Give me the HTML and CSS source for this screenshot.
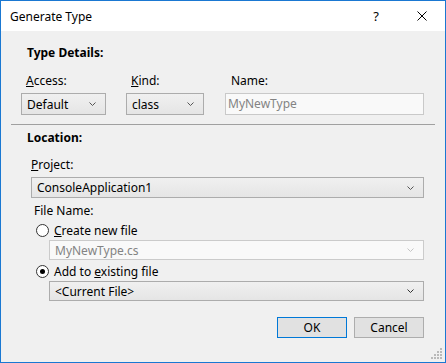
FILE: index.html
```html
<!DOCTYPE html>
<html>
  <head>
    <meta charset="utf-8">
    <title>Generate Type</title>
    <link rel="stylesheet" href="styles.css">
  </head>
  <body>
    <div class="dialog">
      <div class="titlebar">
        <span class="title">Generate Type</span>
        <span class="caption-btn">?</span>
        <span class="caption-btn">
          <svg width="10" height="10" viewBox="0 0 10 10"><path d="M0.5 0.5 L9.5 9.5 M9.5 0.5 L0.5 9.5" stroke="#000" stroke-width="1" fill="none"/></svg>
        </span>
      </div>

      <div class="body">
        <div class="type-details">
          <div class="heading">Type Details:</div>
          <div class="fields">
            <div class="field field-access">
              <label><u>A</u>ccess:</label>
              <div class="combo">
                <span>Default</span>
                <svg class="chev" width="7" height="4" viewBox="0 0 7 4"><path d="M0.5 0.5 L3.5 3.5 L6.5 0.5" stroke="#555" fill="none"/></svg>
              </div>
            </div>
            <div class="field field-kind">
              <label><u>K</u>ind:</label>
              <div class="combo">
                <span>class</span>
                <svg class="chev" width="7" height="4" viewBox="0 0 7 4"><path d="M0.5 0.5 L3.5 3.5 L6.5 0.5" stroke="#555" fill="none"/></svg>
              </div>
            </div>
            <div class="field field-name">
              <label>Name:</label>
              <div class="textbox disabled">MyNewType</div>
            </div>
          </div>
        </div>

        <div class="separator"></div>

        <div class="location">
          <div class="heading">Location:</div>
          <label class="project-label"><u>P</u>roject:</label>
          <div class="combo project-combo">
            <span>ConsoleApplication1</span>
            <svg class="chev" width="7" height="4" viewBox="0 0 7 4"><path d="M0.5 0.5 L3.5 3.5 L6.5 0.5" stroke="#555" fill="none"/></svg>
          </div>

          <div class="file-name">
            <div class="file-label">File Name:</div>
            <div class="radio-row">
              <span class="radio"></span>
              <span><u>C</u>reate new file</span>
            </div>
            <div class="combo file-combo disabled">
              <span>MyNewType.cs</span>
              <svg class="chev" width="7" height="4" viewBox="0 0 7 4"><path d="M0.5 0.5 L3.5 3.5 L6.5 0.5" stroke="#c4c4c4" fill="none"/></svg>
            </div>
            <div class="radio-row">
              <span class="radio checked"></span>
              <span>Add to <u>e</u>xisting file</span>
            </div>
            <div class="combo file-combo">
              <span>&lt;Current File&gt;</span>
              <svg class="chev" width="7" height="4" viewBox="0 0 7 4"><path d="M0.5 0.5 L3.5 3.5 L6.5 0.5" stroke="#333" fill="none"/></svg>
            </div>
          </div>
        </div>

        <div class="buttons">
          <button class="btn default">OK</button>
          <button class="btn">Cancel</button>
        </div>
      </div>

      <svg class="grip" width="12" height="12" viewBox="0 0 12 12">
        <g fill="#b9b9b9">
          <rect x="9" y="0" width="2" height="2"/>
          <rect x="6" y="3" width="2" height="2"/><rect x="9" y="3" width="2" height="2"/>
          <rect x="3" y="6" width="2" height="2"/><rect x="6" y="6" width="2" height="2"/><rect x="9" y="6" width="2" height="2"/>
          <rect x="0" y="9" width="2" height="2"/><rect x="3" y="9" width="2" height="2"/><rect x="6" y="9" width="2" height="2"/><rect x="9" y="9" width="2" height="2"/>
        </g>
      </svg>
    </div>
  </body>
</html>
```

FILE: styles.css
```css
* {
  margin: 0;
  padding: 0;
  box-sizing: border-box;
}

body {
  font-family: "Segoe UI", "Noto Sans", sans-serif;
  font-size: 12px;
  color: #000;
  background: #fff;
}

.dialog {
  position: relative;
  width: 446px;
  height: 363px;
  border: 1px solid #1a78d2;
  background-color: #f0f0f0;
  display: flex;
  flex-direction: column;
}

.titlebar {
  height: 30px;
  background-color: #fff;
  display: flex;
  align-items: center;
}

.title {
  flex: 1;
  padding-left: 9px;
  font-size: 12px;
}

.caption-btn {
  width: 46px;
  height: 30px;
  display: flex;
  align-items: center;
  justify-content: center;
  font-size: 13px;
}

.body {
  flex: 1;
  display: flex;
  flex-direction: column;
}

.heading {
  font-weight: bold;
  line-height: 16px;
}

.type-details {
  padding: 14px 20px 0 20px;
}

.type-details .heading {
  padding-left: 6px;
}

.fields {
  display: flex;
  margin-top: 12px;
}

.field {
  display: flex;
  flex-direction: column;
}

.field label {
  line-height: 16px;
  padding-left: 5px;
  margin-bottom: 4px;
}

.field-access {
  width: 85px;
  margin-right: 20px;
}

.field-kind {
  width: 78px;
  margin-right: 21px;
}

.field-name {
  width: 199px;
}

.field-name label {
  padding-left: 6px;
}

.combo {
  height: 22px;
  border: 1px solid #acacac;
  background: linear-gradient(#f0f0f0, #e5e5e5);
  display: flex;
  align-items: center;
  justify-content: space-between;
  padding: 0 9px 0 5px;
}

.combo .chev {
  flex: none;
}

.textbox {
  height: 22px;
  border: 1px solid #c9c9c9;
  background-color: #f9f9f9;
  line-height: 20px;
  padding-left: 2px;
}

.disabled {
  color: #838383;
}

.separator {
  height: 1px;
  margin: 9px 10px 0 10px;
  background-color: #a0a0a0;
}

.location {
  padding: 5px 21px 0 20px;
}

.location .heading {
  padding-left: 6px;
}

.project-label {
  display: block;
  line-height: 16px;
  margin-top: 11px;
  padding-left: 10px;
}

.project-combo {
  height: 21px;
  margin-top: 4px;
  margin-left: 10px;
}

.file-name {
  padding-left: 13px;
  margin-top: 5px;
}

.file-label {
  line-height: 16px;
}

.radio-row {
  display: flex;
  align-items: center;
  gap: 5px;
  height: 20px;
  margin-top: 1px;
  padding-left: 2px;
}

.radio {
  width: 13px;
  height: 13px;
  border: 1px solid #333;
  border-radius: 50%;
  background-color: #fff;
  display: flex;
  align-items: center;
  justify-content: center;
}

.radio.checked::after {
  content: '';
  width: 5px;
  height: 5px;
  border-radius: 50%;
  background-color: #000;
}

.file-combo {
  height: 20px;
  margin-left: 15px;
  margin-top: 0;
}

.file-combo.disabled {
  background: #f9f9f9;
  border-color: #cbcbcb;
}

.buttons {
  display: flex;
  justify-content: flex-end;
  gap: 7px;
  padding: 16px 21px 0 0;
}

.btn {
  width: 70px;
  height: 21px;
  font-family: inherit;
  font-size: 12px;
  color: #000;
  background-color: #e1e1e1;
  border: 1px solid #adadad;
}

.btn.default {
  border-color: #0078d7;
}

.grip {
  position: absolute;
  right: 2px;
  bottom: 2px;
}
```
